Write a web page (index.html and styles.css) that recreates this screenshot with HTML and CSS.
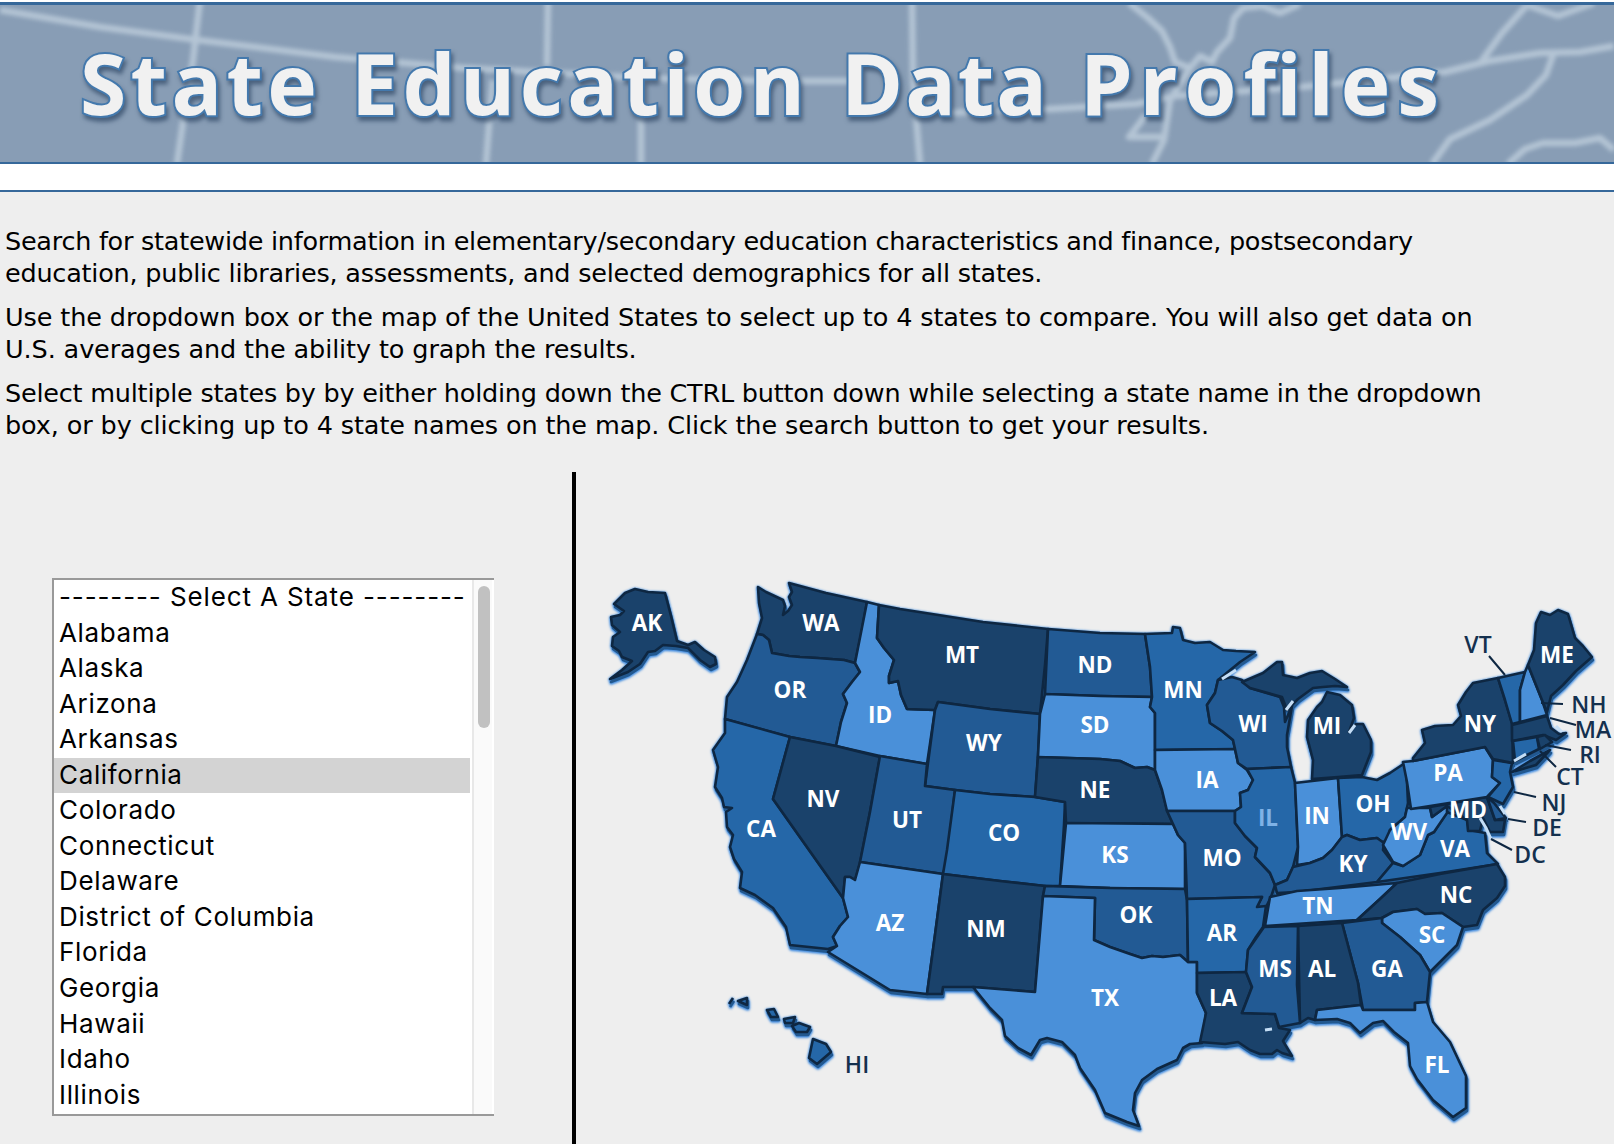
FILE: index.html
```html
<!DOCTYPE html>
<html lang="en">
<head>
<meta charset="utf-8">
<title>State Education Data Profiles</title>
<link rel="stylesheet" href="styles.css">
</head>
<body>
<header class="banner">
  <svg class="banner-art" viewBox="0 0 1614 164" role="img" aria-label="State Education Data Profiles">
    <g class="glow-lines">
      <path d="M0 10L100 27L190 39L335 57L463 68L643 78L772 81L858 81M946 113L1050 109L1136 104L1175 96L1301 87L1445 72L1489 61L1540 53L1580 52L1614 46"/>
      <path d="M200 0L193 60L184 115L177 164M548 0L547 66M493 80L489 125L486 164M641 80V164M912 0L913 80L920 164"/>
      <path d="M1129 3L1148 18L1162 31L1170 47L1175 62L1190 68L1200 56L1212 62L1217 52L1230 38L1234 18L1243 8L1262 6L1280 13L1300 4M1190 68L1170 100L1164 140L1152 164M1146 115L1129 137L1162 137"/>
      <path d="M1527 5L1502 33L1481 62M1527 5L1558 16L1594 3M1553 55L1546 75L1527 95L1490 120L1450 139L1432 164M1508 164L1525 149L1543 143L1575 143L1600 138L1614 150"/>
    </g>
    <g class="banner-title">
      <text x="80" y="115" textLength="237">State</text>
      <text x="351" y="115" textLength="454">Education</text>
      <text x="841" y="115" textLength="206">Data</text>
      <text x="1080" y="115" textLength="359">Profiles</text>
    </g>
  </svg>
</header>
<main class="content">
  <section class="intro">
    <p><span class="tightest">Search for statewide information in elementary/secondary education characteristics and finance, postsecondary</span><br><span class="tighter">education, public libraries, assessments, and selected demographics for all states.</span></p>
    <p><span class="tight">Use the dropdown box or the map of the United States to select up to 4 states to compare. You will also get data on</span><br><span class="tight">U.S. averages and the ability to graph the results.</span></p>
    <p><span class="tighter">Select multiple states by by either holding down the CTRL button down while selecting a state name in the dropdown</span><br><span class="tight">box, or by clicking up to 4 state names on the map. Click the search button to get your results.</span></p>
  </section>
  <section class="picker">
    <div class="list-pane">
      <div class="state-list">
        <ul class="options">
          <li class="prompt">-------- Select A State --------</li>
          <li>Alabama</li>
          <li>Alaska</li>
          <li>Arizona</li>
          <li>Arkansas</li>
          <li class="selected">California</li>
          <li>Colorado</li>
          <li>Connecticut</li>
          <li>Delaware</li>
          <li>District of Columbia</li>
          <li>Florida</li>
          <li>Georgia</li>
          <li>Hawaii</li>
          <li>Idaho</li>
          <li>Illinois</li>
        </ul>
        <div class="track"><div class="thumb"></div></div>
      </div>
    </div>
    <div class="map-pane">
      <svg class="map" viewBox="576 472 1038 672" role="img" aria-label="Map of the United States">
        <g class="land">
          <path class="a" d="M625 593L635 589L648 592L665 593L671 616L677 641L688 645L695 642L704 650L715 657L716 664L710 667L700 660L688 648L676 646L663 645L655 651L648 652L640 664L628 672L610 679L622 670L632 661L622 657L619 651L612 646L613 637L620 632L612 625L611 617L620 615L624 611L614 604Z"/>
          <path class="a" d="M758 587L766 592L783 600L785 606L783 615L788 611L792 605L789 597L792 592L789 583L826 593L867 602L861 635L855 663L844 660L817 658L800 657L789 656L772 653L769 640L763 635L757 634L762 618L759 603Z"/>
          <path class="b" d="M757 634L763 635L769 640L772 653L789 656L800 657L817 658L844 660L855 663L860 672L852 682L843 694L847 703L841 722L836 746L790 737L725 719L727 697L737 682L747 660Z"/>
          <path class="d" d="M867 602L879 605L877 638L884 648L894 660L889 676L889 683L898 681L901 695L907 709L935 710L927 764L880 756L836 746L841 722L847 703L843 694L852 682L860 672L855 663Z"/>
          <path class="a" d="M879 605L900 609L983 622L1048 629L1045 665L1040 714L990 709L938 702L935 710L907 709L901 695L898 681L889 683L889 676L894 660L884 648L877 638Z"/>
          <path class="b" d="M938 702L990 709L1040 714L1038 755L1035 797L990 794L955 790L925 786L928 763L935 710Z"/>
          <path class="c" d="M725 719L790 737L773 799L843 898L848 917L840 926L833 937L837 946L828 949L790 945L786 927L773 908L755 895L740 888L742 872L734 859L730 847L733 835L727 827L726 812L732 808L724 807L722 798L715 787L718 767L713 750L725 733Z"/>
          <path class="a" d="M790 737L836 746L880 757L870 812L860 863L855 880L850 877L845 877L843 898L773 799Z"/>
          <path class="b" d="M880 756L927 764L925 786L955 790L947 860L943 874L860 862L870 812Z"/>
          <path class="c" d="M955 790L990 794L1035 797L1065 802L1064 825L1060 886L1045 886L1000 881L943 874L947 850Z"/>
          <path class="d" d="M860 862L943 874L935 935L927 994L890 990L828 952L837 946L833 937L840 926L848 917L843 898L845 877L850 877L855 880Z"/>
          <path class="a" d="M943 874L1000 881L1045 886L1043 897L1035 992L973 987L943 987L942 994L927 994L935 935Z"/>
          <path class="b" d="M1048 629L1100 633L1145 634L1150 667L1152 697L1100 696L1045 694Z"/>
          <path class="d" d="M1045 694L1100 696L1152 697L1150 707L1155 713L1155 770L1147 767L1135 768L1120 761L1100 759L1038 757L1040 714Z"/>
          <path class="a" d="M1038 757L1100 759L1120 761L1135 768L1147 767L1155 770L1162 790L1167 810L1173 824L1066 823L1065 802L1035 797Z"/>
          <path class="d" d="M1066 823L1173 824L1178 835L1185 843L1185 889L1110 888L1060 886Z"/>
          <path class="b" d="M1045 886L1110 888L1185 889L1187 900L1188 962L1180 955L1163 957L1152 956L1142 958L1130 954L1110 947L1094 940L1095 898L1043 896Z"/>
          <path class="d" d="M1043 896L1095 898L1094 940L1110 947L1130 954L1142 958L1152 956L1163 957L1180 955L1188 962L1197 962L1197 993L1206 1013L1202 1043L1190 1044L1183 1048L1177 1060L1157 1069L1142 1080L1135 1093L1133 1110L1139 1126L1127 1122L1105 1113L1095 1090L1080 1068L1075 1055L1062 1042L1047 1038L1040 1040L1031 1055L1018 1048L1005 1036L1002 1020L990 1008L973 987L1035 992Z"/>
          <path class="c" d="M1145 634L1172 633L1173 627L1180 628L1183 640L1195 643L1210 642L1223 650L1236 651L1255 652L1240 662L1218 680L1215 693L1207 705L1210 723L1222 731L1233 740L1235 749L1155 750L1155 713L1150 707L1152 697L1150 667Z"/>
          <path class="d" d="M1155 750L1235 749L1238 763L1247 770L1253 780L1248 790L1240 793L1241 807L1235 811L1167 811L1162 790L1155 770Z"/>
          <path class="b" d="M1167 811L1235 811L1235 823L1245 836L1257 848L1255 857L1270 873L1275 885L1271 897L1266 907L1257 907L1262 897L1187 899L1185 843L1178 835L1173 824Z"/>
          <path class="c" d="M1187 899L1262 897L1257 907L1266 906L1263 927L1256 937L1248 950L1246 972L1197 973L1197 962L1188 962Z"/>
          <path class="a" d="M1197 973L1246 972L1252 987L1242 1013L1275 1014L1279 1028L1290 1030L1283 1041L1292 1056L1282 1053L1277 1050L1272 1054L1260 1054L1250 1050L1238 1042L1225 1044L1200 1042L1206 1013L1197 993Z"/>
          <path class="b" d="M1218 680L1232 677L1242 680L1250 688L1280 697L1284 707L1285 722L1292 706L1287 735L1287 747L1291 767L1247 769L1238 763L1235 749L1233 740L1222 731L1210 723L1207 705L1215 693Z"/>
          <path class="a" d="M1242 682L1263 673L1277 662L1282 662L1283 675L1297 678L1310 673L1322 671L1335 679L1347 687L1335 686L1323 687L1313 688L1298 699L1287 710L1282 697L1250 688Z"/>
          <path class="a" d="M1327 692L1340 695L1352 705L1354 718L1349 732L1356 724L1363 724L1371 740L1371 752L1362 775L1338 777L1312 779L1313 760L1307 737L1308 720L1317 707L1322 702Z"/>
          <path class="c" d="M1247 769L1291 767L1295 783L1298 847L1293 867L1287 880L1275 885L1270 873L1255 857L1257 848L1245 836L1235 823L1235 811L1241 807L1240 793L1248 790L1253 780Z"/>
          <path class="d" d="M1295 783L1338 778L1342 837L1332 850L1323 858L1310 863L1297 865L1298 847Z"/>
          <path class="c" d="M1338 778L1362 777L1377 780L1390 773L1405 763L1407 782L1408 803L1405 817L1390 830L1388 841L1382 842L1377 838L1360 840L1347 835L1342 837Z"/>
          <path class="b" d="M1342 837L1347 835L1360 840L1377 838L1384 843L1383 850L1393 863L1377 882L1297 892L1277 893L1275 885L1287 880L1293 867L1310 863L1323 858L1332 850Z"/>
          <path class="c" d="M1377 882L1393 863L1403 866L1420 855L1428 835L1434 832L1447 812L1467 820L1469 830L1485 833L1487 853L1498 864L1440 873Z"/>
          <path class="d" d="M1270 897L1297 891L1340 888L1397 883L1380 899L1357 920L1310 923L1265 926Z"/>
          <path class="a" d="M1397 883L1440 874L1497 864L1505 877L1505 886L1497 898L1483 910L1477 925L1463 927L1442 913L1425 914L1417 909L1393 912L1382 918L1357 920L1380 899Z"/>
          <path class="d" d="M1382 918L1393 912L1417 909L1425 914L1442 913L1463 927L1457 945L1430 972L1420 955L1400 937L1382 923Z"/>
          <path class="b" d="M1342 923L1382 918L1382 923L1400 937L1420 955L1430 972L1427 1002L1415 1003L1415 1010L1363 1010L1358 983Z"/>
          <path class="a" d="M1298 926L1342 923L1358 983L1361 1005L1317 1010L1315 1020L1308 1018L1300 1023Z"/>
          <path class="b" d="M1264 927L1298 926L1297 985L1300 1023L1279 1027L1275 1014L1242 1013L1252 987L1246 972L1248 950Z"/>
          <path class="d" d="M1317 1010L1361 1005L1363 1010L1415 1010L1415 1003L1427 1002L1433 1022L1450 1042L1466 1076L1466 1108L1453 1117L1433 1100L1417 1079L1410 1066L1408 1043L1394 1032L1383 1021L1373 1023L1360 1033L1350 1023L1337 1019L1315 1020Z"/>
          <path class="d" d="M1407 808L1430 808L1432 817L1447 806L1447 813L1434 832L1428 835L1420 855L1403 866L1393 862L1383 845L1390 830L1405 817Z"/>
          <path class="a" d="M1430 807L1487 797L1495 820L1505 820L1503 832L1490 832L1483 818L1480 831L1468 831L1467 820L1447 806L1432 817Z"/>
          <path class="b" d="M1487 797L1494 803L1506 818L1495 820Z"/>
          <path class="d" d="M1403 762L1413 761L1485 747L1493 760L1492 777L1500 783L1487 797L1411 809L1407 782Z"/>
          <path class="c" d="M1493 760L1512 763L1510 772L1513 787L1503 804L1488 797L1500 783L1492 777Z"/>
          <path class="a" d="M1413 758L1425 743L1422 730L1435 726L1453 725L1461 716L1458 705L1466 692L1473 683L1498 678L1505 700L1512 723L1513 763L1493 759L1485 747L1413 761Z"/>
          <path class="a" d="M1512 772L1530 761L1550 750L1536 765Z"/>
          <path class="c" d="M1498 678L1525 672L1520 690L1520 722L1512 724L1505 700Z"/>
          <path class="d" d="M1525 672L1528 665L1542 700L1547 715L1520 722L1520 690Z"/>
          <path class="a" d="M1528 665L1534 650L1536 623L1541 612L1550 615L1558 610L1568 614L1575 638L1583 646L1592 657L1576 671L1563 685L1551 696L1547 712L1542 700Z"/>
          <path class="a" d="M1512 725L1547 716L1551 728L1559 734L1566 733L1556 740L1543 735L1512 741Z"/>
          <path class="c" d="M1513 741L1537 737L1539 749L1515 761Z"/>
          <path class="a" d="M1537 737L1545 735L1552 742L1540 749Z"/>
          <path class="c" d="M729 1004L733 998M738 1001L747 998L747 1005ZM767 1010L774 1009L778 1017L771 1017ZM784 1019L795 1017L793 1023L785 1023ZM792 1026L799 1023L810 1027L807 1032L796 1032ZM813 1039L826 1044L831 1052L817 1064L809 1058Z"/>
        </g>
        <g class="water">
          <path d="M1514 761L1526 754M1480 818L1486 828L1491 839M1556 726L1562 732M1500 806L1505 814M1349 733L1355 725M1265 1030L1272 1029M1286 710L1293 701M1222 679L1236 670"/>
        </g>
        <g class="leaders">
          <path d="M1489 656L1505 675M1541 703L1563 704M1550 718L1576 725M1545 745L1571 750M1540 751L1556 767M1514 792L1536 797M1508 819L1526 822M1491 839L1512 850"/>
        </g>
        <g class="names">
          <text x="647" y="631">AK</text><text x="821" y="631">WA</text><text x="790" y="698">OR</text><text x="880" y="723">ID</text>
          <text x="962" y="663">MT</text><text x="1095" y="673">ND</text><text x="1183" y="698">MN</text><text x="1095" y="733">SD</text>
          <text x="984" y="751">WY</text><text x="1207" y="788">IA</text><text x="1095" y="798">NE</text><text x="1004" y="841">CO</text>
          <text x="907" y="828">UT</text><text x="823" y="807">NV</text><text x="761" y="837">CA</text><text x="1115" y="863">KS</text>
          <text x="1222" y="866">MO</text><text class="dim" x="1268" y="826">IL</text><text x="1136" y="923">OK</text><text x="1222" y="941">AR</text>
          <text x="1105" y="1006">TX</text><text x="1223" y="1006">LA</text><text x="1275" y="977">MS</text><text x="986" y="937">NM</text>
          <text x="890" y="931">AZ</text><text x="1322" y="977">AL</text><text x="1387" y="977">GA</text><text x="1318" y="914">TN</text>
          <text x="1432" y="943">SC</text><text x="1456" y="903">NC</text><text x="1455" y="857">VA</text><text x="1353" y="872">KY</text>
          <text x="1437" y="1073">FL</text><text x="1253" y="732">WI</text><text x="1327" y="734">MI</text><text x="1317" y="824">IN</text>
          <text x="1373" y="812">OH</text><text x="1409" y="840">WV</text><text x="1448" y="781">PA</text><text x="1480" y="732">NY</text>
          <text x="1468" y="818">MD</text><text x="1557" y="663">ME</text>
        </g>
        <g class="names outer">
          <text x="1478" y="653">VT</text><text x="1589" y="713">NH</text><text x="1593" y="738">MA</text><text x="1590" y="763">RI</text>
          <text x="1570" y="785">CT</text><text x="1554" y="811">NJ</text><text x="1547" y="836">DE</text><text x="1530" y="863">DC</text>
          <text x="857" y="1073">HI</text>
        </g>
      </svg>
    </div>
  </section>
</main>
</body>
</html>
```
FILE: styles.css
```css
* { box-sizing: border-box; }
body {
  margin: 0;
  height: 1144px;
  overflow: hidden;
  display: flex;
  flex-direction: column;
  background: #fff;
  color: #000;
}
.banner {
  flex: none;
  height: 162px;
  margin: 2px 0 26px;
  border-top: 3px solid #36689a;
  border-bottom: 2px solid #36689a;
  background: #889db5;
  overflow: hidden;
}
.banner-art { display: block; width: 1614px; height: 164px; margin-top: -5px; }
.glow-lines { fill: none; stroke: #b9c9d8; stroke-width: 6.5; stroke-linejoin: round; opacity: .9; filter: blur(2.2px); }
.banner-title {
  font: 700 84px "Open Sans", "Noto Sans", sans-serif;
  fill: #f1f1f1;
  stroke: #4479ad;
  stroke-width: 4;
  paint-order: stroke;
  filter: drop-shadow(2px 4px 2px rgba(40, 65, 95, .65));
}
.content {
  flex: 1;
  display: flex;
  flex-direction: column;
  border-top: 2px solid #36689a;
  background: #eee;
}
.intro {
  padding: 33px 0 0 5px;
  font: 25.5px/32px "DejaVu Sans", Verdana, sans-serif;
  white-space: nowrap;
}
.intro p { margin: 0 0 12px; }
.tight { letter-spacing: -.11px; }
.tighter { letter-spacing: -.225px; }
.tightest { letter-spacing: -.26px; }
.picker { flex: 1; display: flex; margin-top: 19px; }
.list-pane { width: 572px; padding: 106px 0 0 52px; }
.state-list {
  display: flex;
  width: 442px;
  height: 538px;
  border: 2px solid #999;
  border-right: 0;
  background: #fff;
}
.options {
  width: 416px;
  margin: 0;
  padding: 0;
  list-style: none;
  font: 26px/33.6px Inter, sans-serif;
  letter-spacing: .65px;
  white-space: nowrap;
}
.options li { height: 35.55px; padding-left: 5px; }
.options .prompt { letter-spacing: .88px; }
.options .selected { background: #d3d3d3; }
.track {
  width: 20px;
  margin-left: 2px;
  padding: 6px 0 0 4px;
  border-left: 2px solid #e8e8e8;
  background: #fafafa;
}
.thumb { width: 12px; height: 142px; border-radius: 6px; background: #c1c1c1; }
.map-pane { flex: 1; border-left: 4px solid #000; }
.map { display: block; width: 1038px; height: 672px; }
.land {
  stroke: #0e2742;
  stroke-width: 2.6;
  stroke-linejoin: round;
  filter: drop-shadow(1px 3px 0 #22588f) drop-shadow(0 1px 1px #3f8ae0) drop-shadow(0 0 1px #5a9be0);
}
.a { fill: #1a426b; }
.b { fill: #225a94; }
.c { fill: #2567a8; }
.d { fill: #4a90d9; }
.water { fill: none; stroke: #c5def6; stroke-width: 3; }
.leaders { fill: none; stroke: #0e2742; stroke-width: 2; }
.names { font: 700 22.5px "Open Sans", "Noto Sans", sans-serif; fill: #fff; text-anchor: middle; }
.names .dim { fill: #7fb2e6; }
.outer { font-weight: 600; font-size: 23px; fill: #14304e; }
```
